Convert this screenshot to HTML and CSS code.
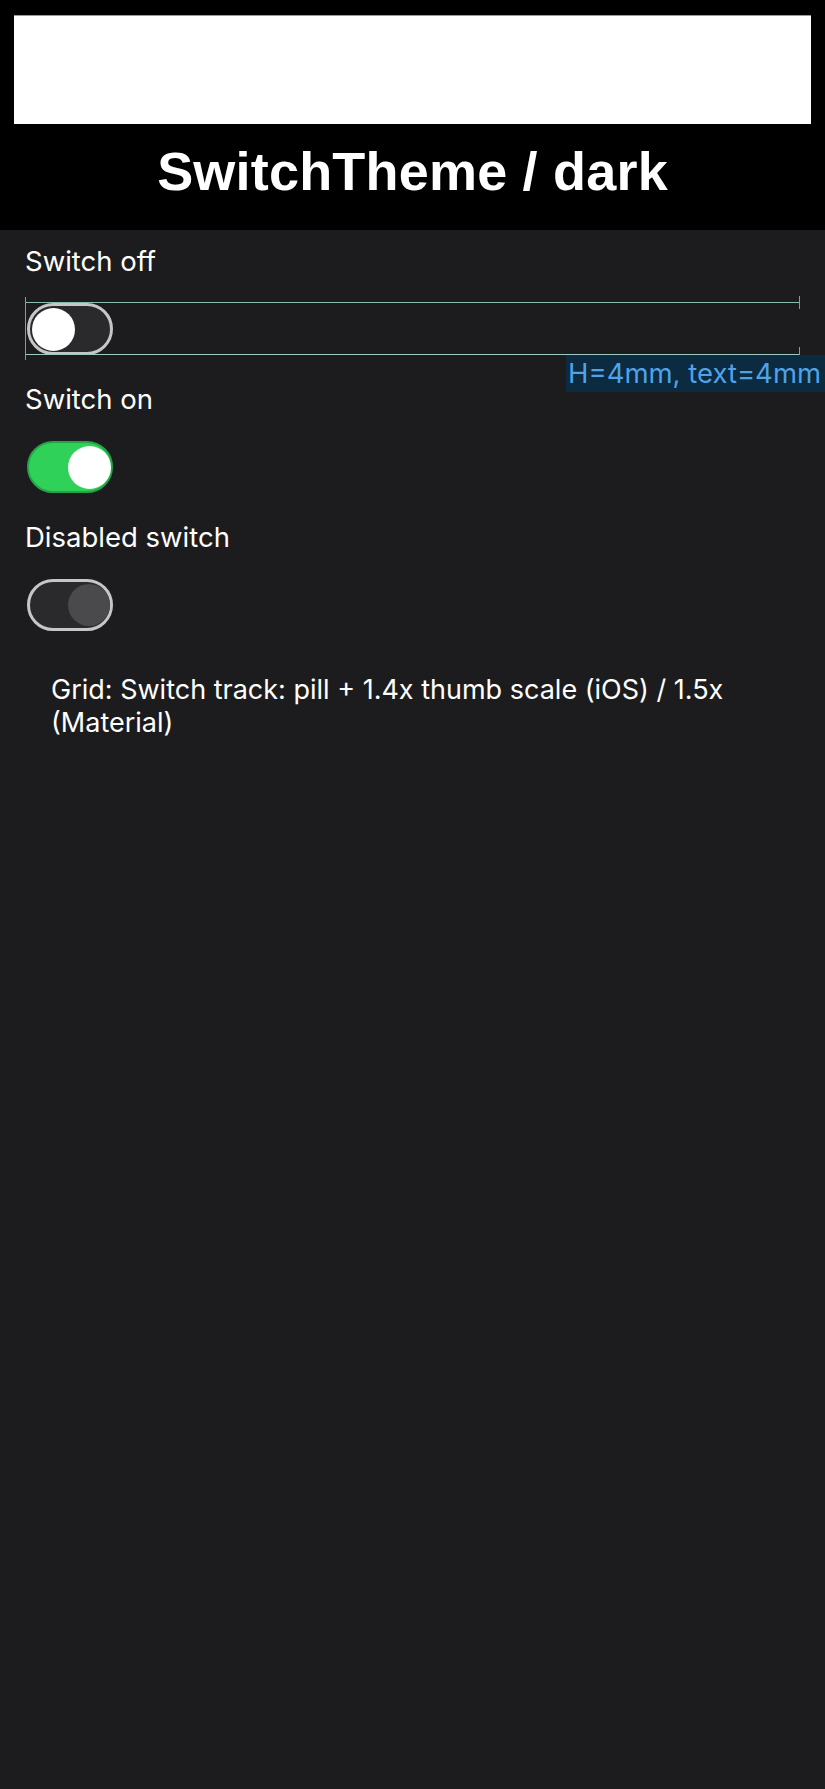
FILE: index.html
```html
<!DOCTYPE html>
<html lang="en">
<head>
<meta charset="utf-8">
<title>SwitchTheme / dark</title>
<link rel="stylesheet" href="styles.css">
</head>
<body>
<header class="header">
  <div class="preview"></div>
  <h1 class="title">SwitchTheme / dark</h1>
</header>
<main class="content">
  <section class="row">
    <div class="label">Switch off</div>
    <div class="switch-wrap measured">
      <div class="switch off"><span class="thumb"></span></div>
      <div class="guide">
        <span class="g-line g-top"></span>
        <span class="g-line g-bottom"></span>
        <span class="g-tick g-left"></span>
        <span class="g-tick g-right-top"></span>
        <span class="g-tick g-right-bottom"></span>
        <span class="g-label">H=4mm, text=4mm</span>
      </div>
    </div>
  </section>
  <section class="row">
    <div class="label">Switch on</div>
    <div class="switch-wrap">
      <div class="switch on"><span class="thumb"></span></div>
    </div>
  </section>
  <section class="row">
    <div class="label">Disabled switch</div>
    <div class="switch-wrap">
      <div class="switch disabled"><span class="thumb"></span></div>
    </div>
  </section>
  <p class="note">Grid: Switch track: pill + 1.4x thumb scale (iOS) / 1.5x (Material)</p>
</main>
</body>
</html>
```

FILE: styles.css
```css
* { box-sizing: border-box; }
html, body { margin: 0; padding: 0; }
body {
  background: #1c1c1e;
  color: #ffffff;
  font-family: Inter, "Noto Sans", sans-serif;
  min-height: 1789px;
}
.header {
  background: #000000;
  height: 230px;
  padding: 15px 14px 0 14px;
  display: flex;
  flex-direction: column;
}
.preview {
  height: 109px;
  background: #ffffff;
  border-top: 1px solid #9a9a9a;
}
.title {
  margin: 0;
  padding-top: 17px;
  text-align: center;
  font-family: "Liberation Sans", Arial, sans-serif;
  font-size: 54px;
  font-weight: 700;
  line-height: 60px;
  color: #ffffff;
  letter-spacing: 0.2px;
}
.content {
  padding: 15px 25px 0 25px;
  display: flex;
  flex-direction: column;
}
.row {
  display: flex;
  flex-direction: column;
  gap: 26px;
  padding-bottom: 28px;
}
.label {
  font-size: 27.5px;
  line-height: 32px;
  color: #ffffff;
}
.switch-wrap {
  position: relative;
  padding-left: 2px;
  height: 52px;
}
.switch {
  width: 86px;
  height: 52px;
  border-radius: 26px;
  border: 3px solid #c6c6c8;
  background: #2a2a2c;
  padding: 2px;
  display: flex;
  align-items: center;
}
.thumb {
  width: 43px;
  height: 43px;
  border-radius: 50%;
  background: #ffffff;
  display: block;
}
.switch.on {
  background: #30d158;
  border: 2px solid #24a446;
  justify-content: flex-end;
  padding: 3px 0 3px 3px;
}
.switch.disabled {
  justify-content: flex-end;
  padding: 2px 0;
}
.switch.disabled .thumb {
  background: #4a4a4c;
  width: 42px;
  height: 42px;
}
.guide {
  position: absolute;
  left: 0;
  top: 0;
  width: 775px;
  height: 52px;
  pointer-events: none;
}
.g-line {
  position: absolute;
  left: 0;
  right: 0;
  height: 1px;
  background: #86bdb2;
}
.g-top { top: -1px; }
.g-bottom { top: 51px; background: #9cc9c0; }
.g-tick {
  position: absolute;
  width: 1px;
  background: #7f9f98;
}
.g-left { left: 0; top: -6px; height: 63px; }
.g-right-top { right: 0; top: -7px; height: 13px; }
.g-right-bottom { right: 0; top: 44px; height: 13px; }
.g-label {
  position: absolute;
  top: 52px;
  right: -25px;
  width: 259px;
  height: 37px;
  background: #0c2a40;
  color: #4fa3e6;
  font-size: 27.5px;
  line-height: 37px;
  padding-left: 2px;
  white-space: nowrap;
}
.note {
  margin: 0;
  padding: 14px 0 0 26px;
  font-size: 27px;
  line-height: 33px;
  color: #ffffff;
}
```
